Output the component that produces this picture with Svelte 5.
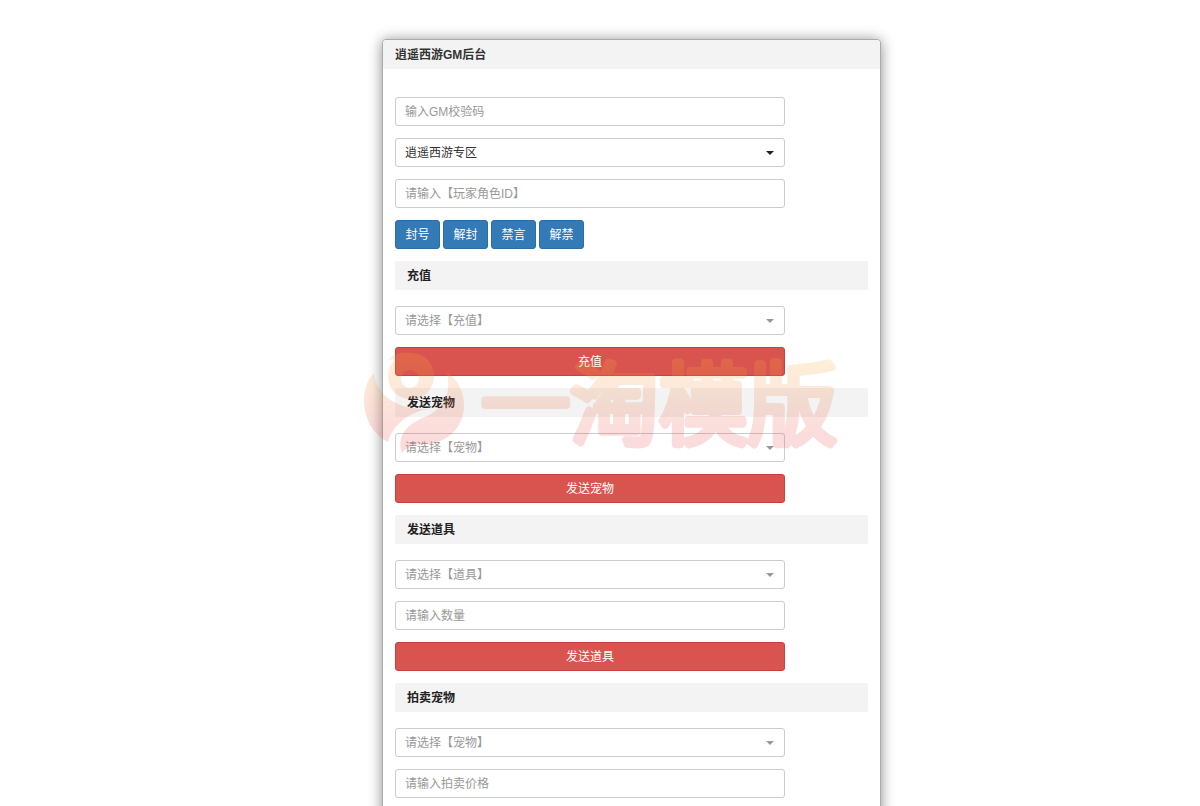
<script lang="ts">
	type Field = { id: string; kind: 'input' | 'select'; text: string };
	type Section = { title: string; fields: Field[]; action?: string };

	const bans = ['封号', '解封', '禁言', '解禁'];

	const sections: Section[] = [
		{
			title: '充值',
			fields: [{ id: 'charge', kind: 'select', text: '请选择【充值】' }],
			action: '充值'
		},
		{
			title: '发送宠物',
			fields: [{ id: 'pet', kind: 'select', text: '请选择【宠物】' }],
			action: '发送宠物'
		},
		{
			title: '发送道具',
			fields: [
				{ id: 'item', kind: 'select', text: '请选择【道具】' },
				{ id: 'item-count', kind: 'input', text: '请输入数量' }
			],
			action: '发送道具'
		},
		{
			title: '拍卖宠物',
			fields: [
				{ id: 'auction-pet', kind: 'select', text: '请选择【宠物】' },
				{ id: 'auction-price', kind: 'input', text: '请输入拍卖价格' }
			]
		}
	];
</script>

<div class="page">
	<main class="panel">
		<h1>逍遥西游GM后台</h1>
		<form class="body" onsubmit={(e) => e.preventDefault()}>
			<input class="control" type="text" aria-label="GM校验码" placeholder="输入GM校验码" />
			<div class="select">
				<select class="control" aria-label="专区">
					<option>逍遥西游专区</option>
				</select>
			</div>
			<input class="control" type="text" aria-label="玩家角色ID" placeholder="请输入【玩家角色ID】" />
			<div class="bans">
				{#each bans as ban}
					<button type="button" class="btn primary">{ban}</button>
				{/each}
			</div>

			{#each sections as { title, fields, action }}
				<h2>{title}</h2>
				{#each fields as { id, kind, text }}
					{#if kind === 'select'}
						<div class="select muted">
							<select class="control" {id} aria-label={title}>
								<option>{text}</option>
							</select>
						</div>
					{:else}
						<input class="control" type="text" {id} aria-label={text} placeholder={text} />
					{/if}
				{/each}
				{#if action}
					<button type="button" class="btn danger">{action}</button>
				{/if}
			{/each}
		</form>
	</main>

	<svg class="watermark" viewBox="0 0 476 104" aria-hidden="true">
		<defs>
			<linearGradient id="fade" gradientUnits="userSpaceOnUse" x1="0" y1="0" x2="0" y2="104">
				<stop offset="0.1" stop-color="#f8b03c" />
				<stop offset="0.8" stop-color="#e8504f" />
			</linearGradient>
		</defs>
		<g fill="url(#fade)">
			<path d="M12 22C14 42 32 59 66 58C44 62 30 76 26 91C12 84 2 68 2 50C2 39 5 29 12 22Z" />
			<path
				fill-rule="evenodd"
				d="M26 9C34 1 42 1 50 2C64 3 72 13 72 25C72 38 62 48 49 48C36 48 26 38 26 25C26 19 28 13 33 9C31 8 28 8 26 9ZM39 28a9 9 0 1 0 18 0a9 9 0 1 0-18 0Z"
			/>
			<path d="M85 21C96 29 102 41 102 54C102 76 86 92 64 93C54 93 46 95 40 102C34 84 46 73 63 66C81 58 90 43 85 21Z" />
			<text x="119" y="86" stroke="url(#fade)" stroke-width="8" stroke-linejoin="round">一淘模版</text>
		</g>
	</svg>
</div>

<style>
	:global(body) {
		margin: 0;
		background: #fff;
	}

	.page {
		display: grid;
		grid-template-columns: 382fr 499fr 319fr;
		height: 100vh;
		overflow: hidden;
		font-family: 'Liberation Sans', 'Noto Sans CJK SC', sans-serif;
		font-size: 12px;
		line-height: 17px;
		color: #333;
	}

	.page * {
		box-sizing: border-box;
	}

	.panel {
		grid-column: 2;
		min-height: 900px;
		margin-top: 39px;
		border: 1px solid #aaa;
		border-radius: 4px;
		background: #fff;
		box-shadow: 0 1px 14px rgba(0, 0, 0, 0.45);
	}

	h1,
	h2 {
		margin: 0;
		padding: 7px 12px 5px;
		background: #f3f3f3;
		font-size: 12px;
		line-height: 17px;
		font-weight: bold;
	}

	h1 {
		border-radius: 3px 3px 0 0;
	}

	h2 {
		margin-bottom: 4px;
		border-radius: 2px;
		color: #222;
	}

	.body {
		display: flex;
		flex-direction: column;
		gap: 12px;
		padding: 28px 12px;
	}

	.control,
	.btn {
		height: 29px;
		padding: 0 9px;
		border: 1px solid #ccc;
		border-radius: 3px;
		font: inherit;
	}

	.control {
		display: block;
		width: 100%;
		max-width: 390px;
		background: #fff;
		color: #333;
		appearance: none;
	}

	select.control,
	.btn {
		padding-top: 1px;
	}

	.control::placeholder {
		color: #999;
		opacity: 1;
	}

	.select {
		position: relative;
		max-width: 390px;
		color: #222;
	}

	.muted,
	.muted .control {
		color: #999;
	}

	.select::after {
		content: '';
		position: absolute;
		top: 13px;
		right: 11px;
		border: 4px solid transparent;
		border-top-color: currentColor;
		border-bottom: 0;
		pointer-events: none;
	}

	.bans {
		display: flex;
		gap: 3px;
	}

	.btn {
		color: #fff;
		cursor: pointer;
	}

	.primary {
		min-width: 45px;
		border-color: #2e6da4;
		background: #337ab7;
	}

	.danger {
		width: 100%;
		max-width: 390px;
		border-color: #c9403c;
		background: #d9534f;
	}

	.watermark {
		position: fixed;
		top: 50%;
		left: 50%;
		width: 476px;
		height: 104px;
		overflow: visible;
		transform: translate(-50%, -50%);
		opacity: 0.2;
		pointer-events: none;
	}

	.watermark text {
		font-family: 'Noto Sans CJK SC', sans-serif;
		font-size: 89px;
		font-weight: 300;
	}
</style>
